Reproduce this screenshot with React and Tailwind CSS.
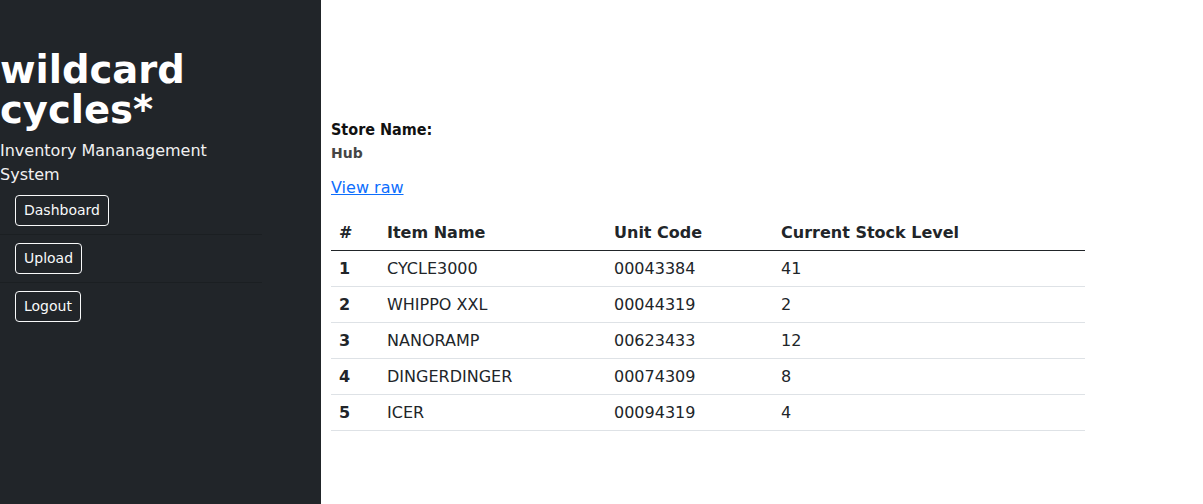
const items = [
  { id: 1, name: "CYCLE3000", code: "00043384", stock: 41 },
  { id: 2, name: "WHIPPO XXL", code: "00044319", stock: 2 },
  { id: 3, name: "NANORAMP", code: "00623433", stock: 12 },
  { id: 4, name: "DINGERDINGER", code: "00074309", stock: 8 },
  { id: 5, name: "ICER", code: "00094319", stock: 4 },
];

const font = { fontFamily: '"DejaVu Sans", sans-serif' };

// ── Sidebar ────────────────────────────────────────────────────────────────
function Sidebar() {
  const links = ["Dashboard", "Upload", "Logout"];
  return (
    <aside className="w-[321px] shrink-0 bg-[#212529] min-h-screen text-[#f8f9fa]">
      <div className="w-[262px] pt-[50px]">
        <h1 className="text-[38.5px] leading-[40px] font-bold text-white mb-[9px]">wildcard cycles*</h1>
        <p className="text-[16px] leading-6 text-[#f1f1f1]">Inventory Mananagement System</p>
        <ul>
          {links.map((l, i) => (
            <li
              key={l}
              className={`py-2 pl-[15px] ${i < links.length - 1 ? "border-b border-[#1b1f22]" : ""}`}
            >
              <button className="border border-[#f8f9fa] rounded-[4px] px-2 py-1 text-[14px] leading-[21px] text-[#f8f9fa]">
                {l}
              </button>
            </li>
          ))}
        </ul>
      </div>
    </aside>
  );
}

// ── Stock table ────────────────────────────────────────────────────────────
function StockTable() {
  const cols = "grid grid-cols-[48px_227px_167px_312px] items-center";
  return (
    <div className="w-[754px] text-[16px] text-[#212529]">
      <div className={`${cols} h-[37px] pt-px border-b border-[#212529] font-bold`}>
        <div className="px-2">#</div>
        <div className="px-2">Item Name</div>
        <div className="px-2">Unit Code</div>
        <div className="px-2">Current Stock Level</div>
      </div>
      {items.map((it) => (
        <div key={it.id} className={`${cols} h-[36px] border-b border-[#dee2e6]`}>
          <div className="px-2 font-bold">{it.id}</div>
          <div className="px-2">{it.name}</div>
          <div className="px-2">{it.code}</div>
          <div className="px-2">{it.stock}</div>
        </div>
      ))}
    </div>
  );
}

// ── App root ───────────────────────────────────────────────────────────────
export default function App() {
  return (
    <div className="flex min-h-screen bg-white" style={font}>
      <Sidebar />
      <main className="flex-1 pt-[118px] px-[10px]">
        <h5
          className="text-[16px] leading-6 font-bold text-[#111]"
          style={{ fontFamily: '"DejaVu Sans Condensed", "DejaVu Sans", sans-serif', fontStretch: "condensed" }}
        >
          Store Name:
        </h5>
        <h6 className="text-[14px] leading-[22px] font-bold text-[#454545]">Hub</h6>
        <a href="#" className="block mt-3 text-[16px] leading-6 text-[#0d6efd] underline w-fit">
          View raw
        </a>
        <div className="mt-[14px]">
          <StockTable />
        </div>
      </main>
    </div>
  );
}
